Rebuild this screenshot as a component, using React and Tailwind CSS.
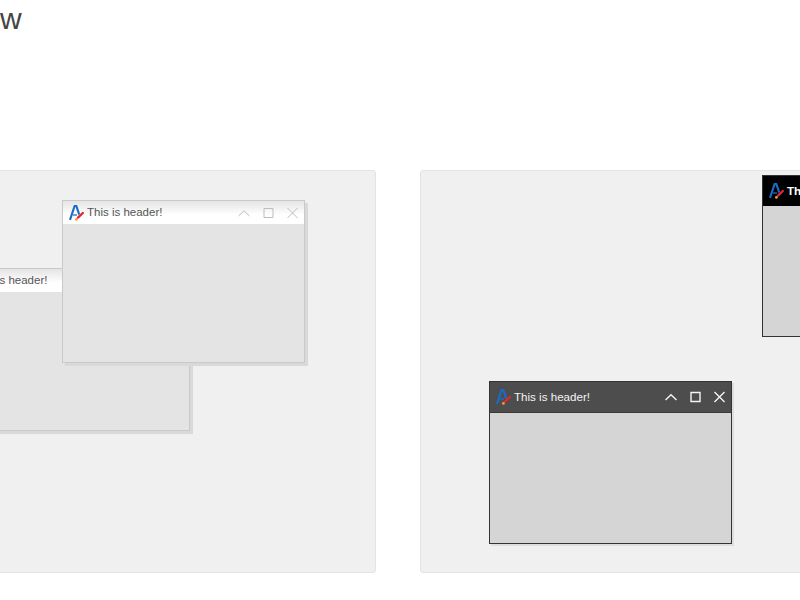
const font = { fontFamily: '"Liberation Sans", Arial, sans-serif' }

function Logo({ className }) {
  return (
    <svg viewBox="0 0 16 16" className={className} fill="none">
      <path d="M2 14.8 L6.6 1 H8.4 L11.2 9.6" stroke="#1a6cc8" strokeWidth="2.1" strokeLinejoin="round" />
      <path d="M4.8 10 H9" stroke="#1a6cc8" strokeWidth="1.3" />
      <path d="M10 12.6 L14.8 8" stroke="#e4262c" strokeWidth="2.3" strokeLinecap="round" />
      <circle cx="8.4" cy="14.4" r="1.4" fill="#f0a030" />
    </svg>
  )
}

function Controls({ color, width = 1 }) {
  return (
    <div className="flex items-center gap-[10px]">
      <svg width="14" height="14" viewBox="0 0 14 14" fill="none" stroke={color} strokeWidth={width}>
        <path d="M1.5 10 L7 4.8 L12.5 10" />
      </svg>
      <svg width="14" height="14" viewBox="0 0 14 14" fill="none" stroke={color} strokeWidth={width}>
        <path d="M3 2.5 H12 V11.5 H3 Z" />
      </svg>
      <svg width="14" height="14" viewBox="0 0 14 14" fill="none" stroke={color} strokeWidth={width}>
        <path d="M2.5 2 L12.5 12 M12.5 2 L2.5 12" />
      </svg>
    </div>
  )
}

function LightWindow({ className }) {
  return (
    <div className={`absolute w-[243px] h-[163px] flex flex-col bg-[#e4e4e4] border border-[#c9c9c9] shadow-[3px_3px_0_#d9d9d9] ${className}`}>
      <div className="h-[23px] shrink-0 flex items-center px-[5px] bg-gradient-to-b from-[#e4e4e4] via-white via-60% to-white">
        <Logo className="w-4 h-4" />
        <span className="ml-[3px] text-[11.5px] text-[#555]" style={font}>This is header!</span>
        <div className="ml-auto">
          <Controls color="#bdbdbd" />
        </div>
      </div>
    </div>
  )
}

function DarkWindow() {
  return (
    <div className="absolute left-[68px] top-[210px] w-[243px] h-[163px] flex flex-col bg-[#d5d5d5] border border-[#333] shadow-[2px_2px_0_#dedede]">
      <div className="h-[31px] shrink-0 flex items-center px-[5px] bg-[#4d4d4d] border-b border-[#3a3a3a]">
        <Logo className="w-4 h-4" />
        <span className="ml-[3px] text-[11.6px] text-[#f4f4f4]" style={font}>This is header!</span>
        <div className="ml-auto">
          <Controls color="#f4f4f4" width={1.4} />
        </div>
      </div>
    </div>
  )
}

function BlackWindow() {
  return (
    <div className="absolute left-[341px] top-[4px] w-[243px] h-[162px] flex flex-col bg-[#d5d5d5] border border-[#333]">
      <div className="h-[30px] shrink-0 flex items-center px-[5px] bg-black">
        <Logo className="w-4 h-4" />
        <span className="ml-[3px] text-[11.6px] font-bold text-white" style={font}>This is header!</span>
      </div>
    </div>
  )
}

export default function App() {
  return (
    <div className="w-[800px] h-[600px] overflow-hidden bg-white">
      <h1 className="h-[170px] pt-[3px] text-[30px] leading-[32px] text-[#444]" style={font}>w</h1>
      <div className="flex gap-[44px] -ml-[24px]">
        <div className="relative w-[400px] h-[403px] shrink-0 bg-[#f0f0f0] border border-[#e4e4e4] rounded-[3px]">
          <LightWindow className="left-[-30px] top-[97px]" />
          <LightWindow className="left-[85px] top-[29px]" />
        </div>
        <div className="relative w-[420px] h-[403px] shrink-0 bg-[#f0f0f0] border border-[#e4e4e4] rounded-[3px]">
          <BlackWindow />
          <DarkWindow />
        </div>
      </div>
    </div>
  )
}
